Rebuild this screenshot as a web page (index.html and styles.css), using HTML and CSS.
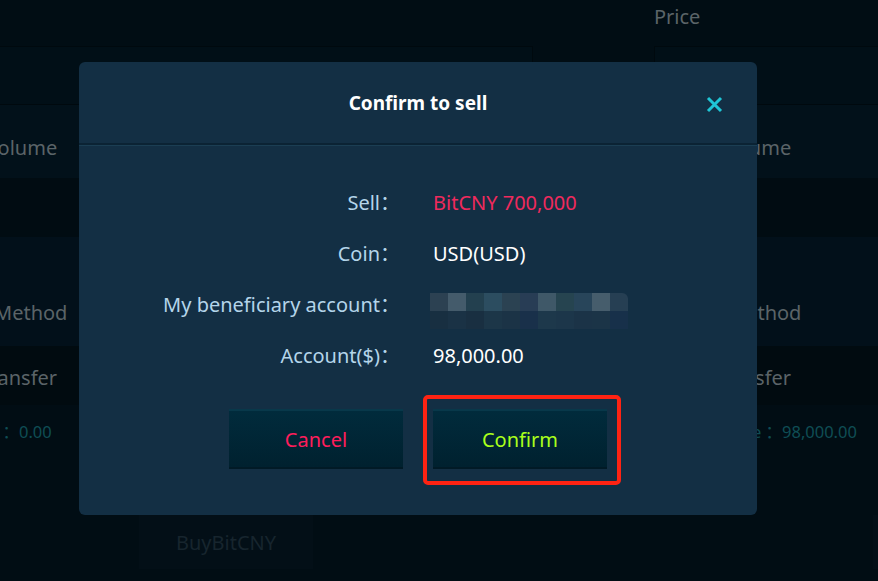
FILE: index.html
```html
<!DOCTYPE html>
<html lang="en">
<head>
    <meta charset="UTF-8">
    <meta name="viewport" content="width=device-width, initial-scale=1.0">
    <title>Confirm to sell</title>
    <link rel="stylesheet" href="styles.css">
</head>
<body>
    <main class="page">
        <section class="panel">
            <p class="panel-label">Price</p>
            <div class="panel-input panel-input--short"></div>
            <p class="panel-label panel-label--row volume">Volume</p>
            <div class="panel-input panel-input--dark"></div>
            <p class="panel-label panel-label--tall method">Method</p>
            <div class="panel-select"><span class="transfer">Bank transfer</span></div>
            <p class="balance balance--left"><span class="balance-key">Balance ：</span>0.00</p>
            <button class="buy-btn" type="button">BuyBitCNY</button>
        </section>
        <section class="panel">
            <p class="panel-label">Price</p>
            <div class="panel-input"></div>
            <p class="panel-label panel-label--row volume">Volume</p>
            <div class="panel-input panel-input--dark"></div>
            <p class="panel-label panel-label--tall method">Method</p>
            <div class="panel-select"><span class="transfer">Bank transfer</span></div>
            <p class="balance"><span class="balance-key">Balance ：</span>98,000.00</p>
            <button class="buy-btn" type="button">SellBitCNY</button>
        </section>
    </main>

    <div class="dialog" role="dialog">
        <header class="dialog-head">
            <h2 class="dialog-title">Confirm to sell</h2>
            <button class="dialog-close" type="button" aria-label="close">
                <svg width="17" height="17" viewBox="0 0 17 17">
                    <path d="M2 2 L15 15 M15 2 L2 15" stroke="#1fc6d6" stroke-width="3" fill="none"/>
                </svg>
            </button>
        </header>

        <dl class="info">
            <dt>Sell：</dt>
            <dd class="sell">BitCNY 700,000</dd>
            <dt>Coin：</dt>
            <dd>USD(USD)</dd>
            <dt>My beneficiary account：</dt>
            <dd><div class="mosaic"><div class="mosaic-top"></div><div class="mosaic-bottom"></div></div></dd>
            <dt>Account($)：</dt>
            <dd>98,000.00</dd>
        </dl>

        <div class="actions">
            <button class="btn btn-cancel" type="button">Cancel</button>
            <span class="focus-mark"><button class="btn btn-confirm" type="button">Confirm</button></span>
        </div>
    </div>
</body>
</html>
```

FILE: styles.css
```css
body {
    margin: 0;
    width: 878px;
    height: 581px;
    overflow: hidden;
    position: relative;
    background: #010d14;
    font-family: "Noto Sans", "Noto Sans CJK SC", sans-serif;
    font-size: 20px;
}

/* dimmed page behind the dialog */
.page {
    display: flex;
    margin-left: -96px;
}

.panel {
    flex: 0 0 734px;
    min-width: 0;
    padding-left: 16px;
    box-sizing: border-box;
}

.panel p {
    margin: 0;
}

.panel-label {
    height: 46px;
    line-height: 34px;
    color: #5b6468;
}

.panel-label--row {
    height: 73px;
    line-height: 86px;
    background: #02111a;
}

.panel-label--tall {
    height: 109px;
    line-height: 152px;
    background: #02101a;
}

.volume {
    padding-left: 66px;
}

.method {
    padding-left: 74px;
}

.panel-input {
    height: 59px;
    width: 718px;
    box-sizing: border-box;
    border: 1px solid #00090e;
    background: #010f17;
}

.panel-input--short {
    width: 613px;
}

.panel-input--dark {
    background: #010c12;
    border-color: #010c12;
}

.panel-select {
    height: 59px;
    line-height: 64px;
    background: #010b10;
    color: #5b6468;
}

.transfer {
    margin-left: 10px;
}

.balance {
    height: 55px;
    line-height: 54px;
    color: #0f4d55;
    font-size: 16.5px;
}

.balance-key {
    display: inline-block;
    width: 128px;
    text-align: right;
}

.balance--left {
    margin-left: -29px !important;
}

.buy-btn {
    margin: 55px 0 0 219px;
    width: 174px;
    height: 54px;
    border: 0;
    background: #030f17;
    color: #17252e;
    font-family: inherit;
    font-size: 20px;
}

/* dialog */
.dialog {
    position: absolute;
    left: 79px;
    top: 62px;
    width: 678px;
    height: 453px;
    background: #132f44;
    border-radius: 6px;
}

.dialog-head {
    position: relative;
    height: 81px;
    display: flex;
    align-items: center;
    justify-content: center;
    border-bottom: 2px solid #0b2334;
    box-shadow: 0 1px 0 #1b3e53;
}

.dialog-title {
    margin: 0;
    font-size: 19px;
    font-weight: 700;
    color: #ffffff;
}

.dialog-close {
    position: absolute;
    right: 34px;
    top: 34px;
    width: 17px;
    height: 17px;
    padding: 0;
    border: 0;
    background: none;
    display: flex;
}

.info {
    display: grid;
    grid-template-columns: 321px 1fr;
    grid-auto-rows: 51px;
    column-gap: 33px;
    margin: 0;
    padding-top: 32px;
    line-height: 51px;
}

.info dt {
    text-align: right;
    color: #b4d5ea;
    white-space: nowrap;
}

.info dd {
    margin: 0;
    color: #ffffff;
}

.info .sell {
    color: #ef2a5d;
}

.mosaic {
    margin: 14px 0 0 -3px;
    width: 198px;
    border-radius: 0 6px 0 0;
    overflow: hidden;
}

.mosaic-top,
.mosaic-bottom {
    height: 18px;
}

.mosaic-top {
    background: linear-gradient(90deg,
        #2c4152 0 18px, #445b6b 18px 36px, #23404f 36px 54px, #2c4d60 54px 72px,
        #2b4252 72px 90px, #283d55 90px 108px, #3f5868 108px 126px, #264450 126px 144px,
        #28455a 144px 162px, #465d6c 162px 180px, #263f53 180px 198px);
}

.mosaic-bottom {
    background: linear-gradient(90deg,
        #182f41 0 18px, #1a3245 18px 36px, #192f41 36px 54px, #1c3648 54px 72px,
        #1b3346 72px 90px, #19304a 90px 108px, #1d384b 108px 126px, #1c364a 126px 144px,
        #1b3347 144px 162px, #1b3447 162px 180px, #17304a 180px 198px);
}

.actions {
    display: flex;
    justify-content: center;
    gap: 30px;
    padding-top: 28px;
}

.btn {
    width: 174px;
    height: 60px;
    border: 0;
    border-top: 2px solid #08384a;
    border-bottom: 2px solid #011a26;
    background: linear-gradient(#012b3c, #00212f);
    font-family: inherit;
    font-size: 20px;
    padding: 0;
}

.btn-cancel {
    color: #ff1d5b;
}

.btn-confirm {
    color: #a9ff1b;
}

.focus-mark {
    position: relative;
    display: flex;
}

.focus-mark::after {
    content: "";
    position: absolute;
    left: -10px;
    right: -14px;
    top: -14px;
    bottom: -16px;
    border: 4px solid #ff2313;
    border-radius: 5px;
}
```
